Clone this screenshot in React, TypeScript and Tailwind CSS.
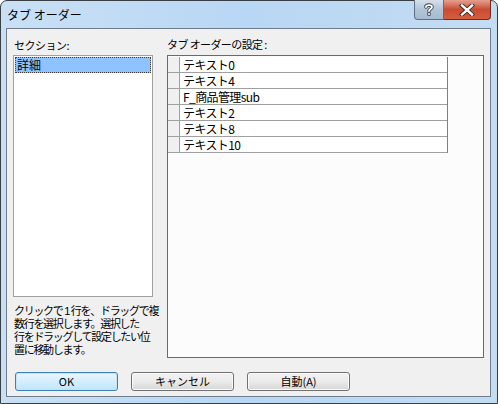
import React from 'react';

const font = { fontFamily: '"Noto Sans CJK JP", "Noto Sans", sans-serif' };
const tightFont = { fontFamily: '"Liberation Sans", "Noto Sans CJK JP", sans-serif' };

const rows = ['テキスト0', 'テキスト4', 'F_商品管理sub', 'テキスト2', 'テキスト8', 'テキスト10'];

const Button: React.FC<{ label: string; focused?: boolean }> = ({ label, focused }) => (
  <div
    className={`w-[103px] h-[19px] rounded-[3px] border flex items-center justify-center text-[11px] leading-none text-black ${
      focused
        ? 'border-[#3c7fb1] bg-gradient-to-b from-[#eaf6fd] to-[#bee6fd] shadow-[inset_0_0_0_1px_#c4e5f6]'
        : 'border-[#707070] bg-gradient-to-b from-[#f2f2f2] via-[#ebebeb] to-[#d6d6d6] shadow-[inset_0_0_0_1px_#fbfbfb]'
    }`}
  >
    {label}
  </div>
);

export default function App() {
  return (
    <div className="w-[498px] h-[404px] bg-white" style={font}>
      <div className="relative w-[498px] h-[404px] rounded-t-[7px] border border-[#3a3f46] bg-gradient-to-r from-[#c9e0f4] via-[#b8d7f4] to-[#c3dcf1] flex flex-col">
        {/* title bar */}
        <div className="h-[27px] flex items-center pl-[6px] text-[12px] text-black whitespace-pre">
          タブ オーダー
        </div>

        {/* caption buttons */}
        <div className="absolute top-[-1px] left-[413px] flex">
          <div className="w-[30px] h-[20px] rounded-bl-[4px] border border-[#5f6e80] border-t-0 bg-gradient-to-b from-[#d5e0eb] via-[#b3c4d6] to-[#a7bbd0] flex items-center justify-center">
            <svg width="10" height="13" viewBox="0 0 10 13">
              <path
                d="M2 4 C2 1.5 8 1.5 8 4 C8 6 5 6 5 8"
                fill="none"
                stroke="#3a4756"
                strokeWidth="3.6"
                strokeLinecap="round"
              />
              <circle cx="5" cy="11" r="1.9" fill="#3a4756" />
              <path
                d="M2 4 C2 1.5 8 1.5 8 4 C8 6 5 6 5 8"
                fill="none"
                stroke="#ffffff"
                strokeWidth="1.8"
                strokeLinecap="round"
              />
              <circle cx="5" cy="11" r="1" fill="#ffffff" />
            </svg>
          </div>
          <div className="w-[47px] h-[20px] rounded-br-[4px] border border-[#6d2a22] border-t-0 border-l-0 bg-gradient-to-b from-[#e4a08e] via-[#c94a32] to-[#d45e3f] flex items-center justify-center">
            <svg width="16" height="12" viewBox="0 0 16 12">
              <path d="M3 1.5 L13 10.5 M13 1.5 L3 10.5" stroke="#3b2320" strokeWidth="4.2" strokeLinecap="square" />
              <path d="M3 1.5 L13 10.5 M13 1.5 L3 10.5" stroke="#ffffff" strokeWidth="2.4" strokeLinecap="square" />
            </svg>
          </div>
        </div>

        {/* client area */}
        <div className="ml-[5px] mr-[6px] mb-[6px] flex-1 border border-[#6f7d8c] bg-[#f0f0f0] pl-[6px]">
          <div className="flex">
            {/* left */}
            <div className="w-[140px] flex flex-col">
              <div className="h-[26px] flex items-end pb-[4px] pl-[1px] text-[11px] leading-none text-black tracking-[-0.5px]">
                セクション:
              </div>
              <div className="h-[242px] border border-[#a0a0a0] bg-white p-[1px]">
                <div className="h-[16px] border border-dotted border-[#3a3a3a] bg-[#8fc3ff] flex items-center pl-[1px] text-[12px] leading-none text-black">
                  詳細
                </div>
              </div>
              <div
                className="mt-[8px] pl-[1px] text-[11px] leading-[13px] text-black tracking-[-1.3px] whitespace-pre"
                style={tightFont}
              >
                <div>クリックで 1 行を、ドラッグで複</div>
                <div>数行を選択します。選択した</div>
                <div>行をドラッグして設定したい位</div>
                <div>置に移動します。</div>
              </div>
            </div>

            {/* right */}
            <div className="ml-[14px] w-[317px] flex flex-col">
              <div className="h-[26px] flex items-end pb-[5px] text-[11px] leading-none text-black tracking-[-0.6px] whitespace-pre">
                タブ オーダーの設定 :
              </div>
              <div className="h-[303px] border border-[#6a6a6a] bg-[#fcfcfc] pt-[1px]">
                <div className="w-[280px] border-r border-[#808080]">
                  {rows.map((r) => (
                    <div key={r} className="h-[16px] flex border-b border-[#a0a0a0]">
                      <div className="w-[12px] bg-[#f0f0f0] border-r border-[#a0a0a0]" />
                      <div className="flex-1 bg-white pl-[3px] flex items-center text-[12px] leading-none text-black tracking-[-0.6px]">
                        {r}
                      </div>
                    </div>
                  ))}
                </div>
              </div>
            </div>
          </div>

          {/* buttons */}
          <div className="mt-[14px] ml-[2px] flex gap-[13px]">
            <Button label="OK" focused />
            <Button label="キャンセル" />
            <Button label="自動(A)" />
          </div>
        </div>
      </div>
    </div>
  );
}
